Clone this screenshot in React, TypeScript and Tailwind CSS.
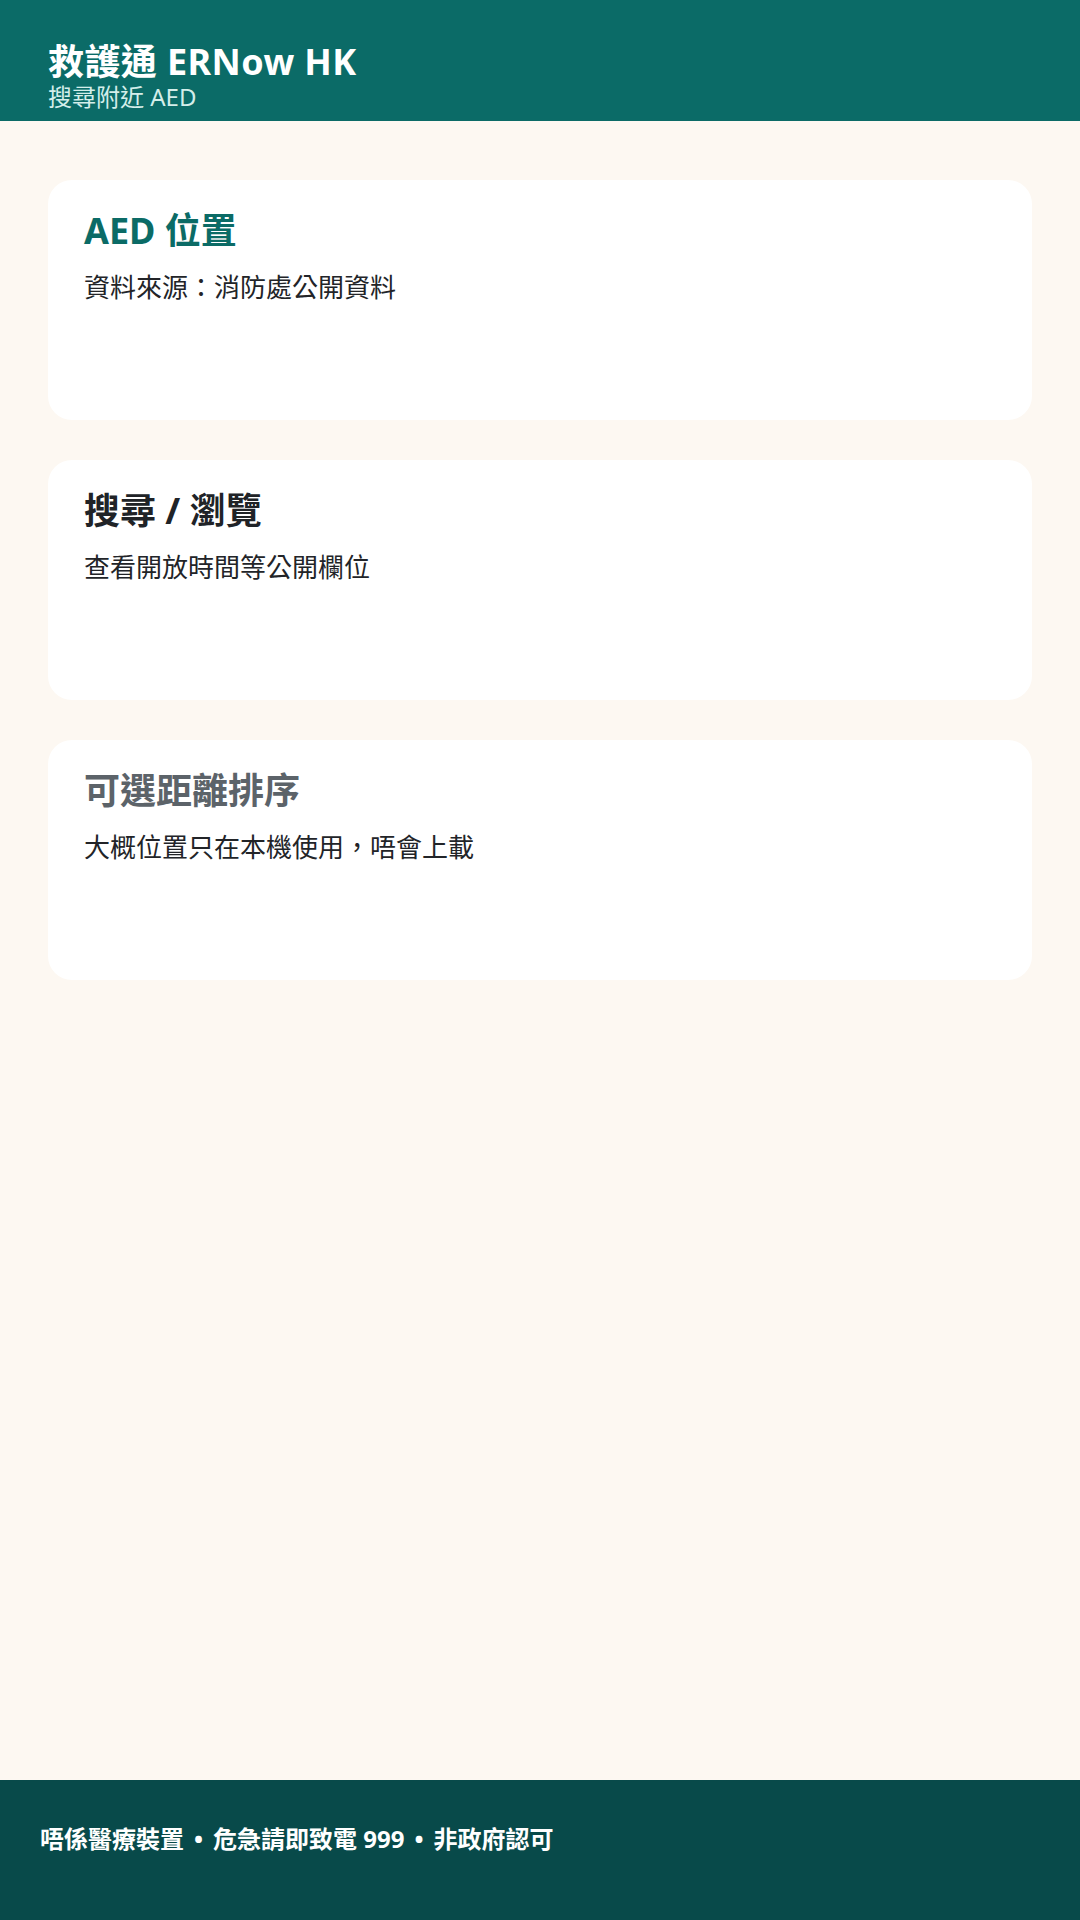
const cards = [
  { title: "AED 位置", body: "資料來源：消防處公開資料", tone: "text-[#0b6b66]" },
  { title: "搜尋 / 瀏覽", body: "查看開放時間等公開欄位", tone: "text-[#202327]" },
  { title: "可選距離排序", body: "大概位置只在本機使用，唔會上載", tone: "text-[#5c6369]" },
];

export default function App() {
  return (
    <div
      className="flex min-h-screen flex-col bg-[#fdf8f2]"
      style={{ fontFamily: '"Noto Sans", "Noto Sans CJK TC", sans-serif' }}
    >
      <header className="bg-[#0b6b67] px-12 pt-[42px] pb-[12px]">
        <h1 className="text-[36px] font-bold leading-[40px] tracking-[0.4px] text-white">救護通 ERNow HK</h1>
        <p className="mt-[2px] text-[24px] leading-[25px] text-[#d4eeea]">搜尋附近 AED</p>
      </header>

      <main className="flex flex-1 flex-col gap-10 px-12 pt-[59px]">
        {cards.map((card) => (
          <section key={card.title} className="h-[240px] rounded-[24px] bg-white px-9 pt-[29px]">
            <h2 className={`text-[36px] font-bold leading-[44px] ${card.tone}`}>{card.title}</h2>
            <p className="mt-[15px] text-[26px] leading-[38px] text-[#222428]">{card.body}</p>
          </section>
        ))}
      </main>

      <footer className="bg-[#084a4a] px-10 pt-[41px] pb-[63px]">
        <p className="text-[24px] font-bold leading-9 text-white">
          唔係醫療裝置<span className="mx-[10px]">•</span>危急請即致電 999<span className="mx-[10px]">•</span>非政府認可
        </p>
      </footer>
    </div>
  );
}
